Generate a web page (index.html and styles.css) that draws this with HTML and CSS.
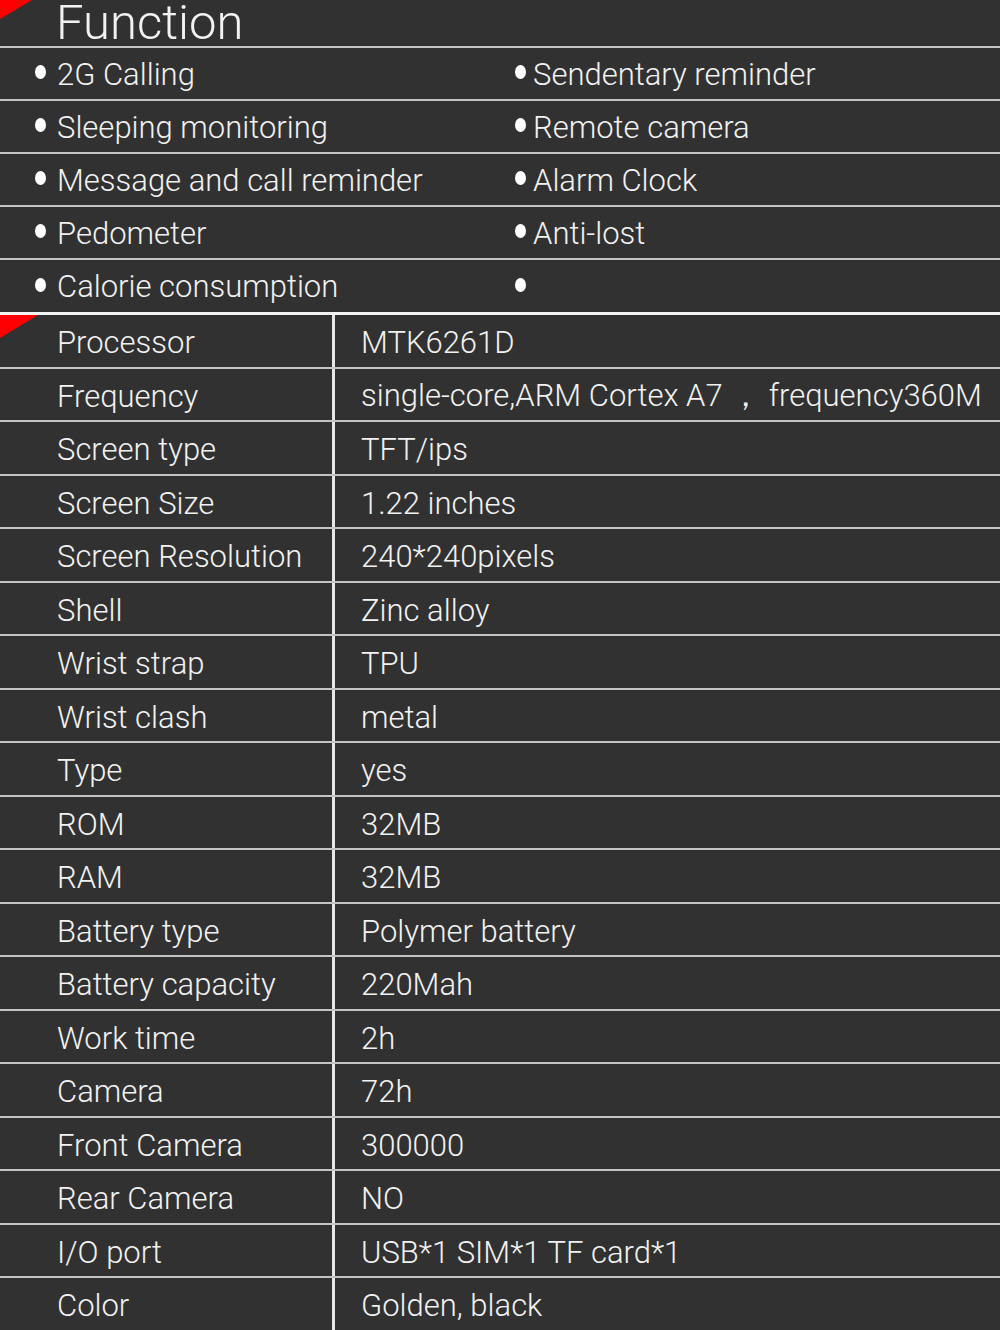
FILE: index.html
```html
<!DOCTYPE html>
<html lang="en">
<head>
    <meta charset="UTF-8">
    <title>Function</title>
    <link rel="stylesheet" href="styles.css">
</head>
<body>
    <div class="sheet">
        <div class="head">
            <span class="corner"></span>
            <h1>Function</h1>
        </div>

        <div class="features">
            <div class="frow">
                <div class="fcell"><span class="dot"></span>2G Calling</div>
                <div class="fcell right"><span class="dot"></span>Sendentary reminder</div>
            </div>
            <div class="frow">
                <div class="fcell"><span class="dot"></span>Sleeping monitoring</div>
                <div class="fcell right"><span class="dot"></span>Remote camera</div>
            </div>
            <div class="frow">
                <div class="fcell"><span class="dot"></span>Message and call reminder</div>
                <div class="fcell right"><span class="dot"></span>Alarm Clock</div>
            </div>
            <div class="frow">
                <div class="fcell"><span class="dot"></span>Pedometer</div>
                <div class="fcell right"><span class="dot"></span>Anti-lost</div>
            </div>
            <div class="frow">
                <div class="fcell"><span class="dot"></span>Calorie consumption</div>
                <div class="fcell right"><span class="dot"></span></div>
            </div>
        </div>

        <div class="specs">
            <span class="corner"></span>
            <div class="srow"><div class="label">Processor</div><div class="value">MTK6261D</div></div>
            <div class="srow"><div class="label">Frequency</div><div class="value">single-core,ARM Cortex A7 ， frequency360M</div></div>
            <div class="srow"><div class="label">Screen type</div><div class="value">TFT/ips</div></div>
            <div class="srow"><div class="label">Screen Size</div><div class="value">1.22 inches</div></div>
            <div class="srow"><div class="label">Screen Resolution</div><div class="value">240*240pixels</div></div>
            <div class="srow"><div class="label">Shell</div><div class="value">Zinc alloy</div></div>
            <div class="srow"><div class="label">Wrist strap</div><div class="value">TPU</div></div>
            <div class="srow"><div class="label">Wrist clash</div><div class="value">metal</div></div>
            <div class="srow"><div class="label">Type</div><div class="value">yes</div></div>
            <div class="srow"><div class="label">ROM</div><div class="value">32MB</div></div>
            <div class="srow"><div class="label">RAM</div><div class="value">32MB</div></div>
            <div class="srow"><div class="label">Battery type</div><div class="value">Polymer battery</div></div>
            <div class="srow"><div class="label">Battery capacity</div><div class="value">220Mah</div></div>
            <div class="srow"><div class="label">Work time</div><div class="value">2h</div></div>
            <div class="srow"><div class="label">Camera</div><div class="value">72h</div></div>
            <div class="srow"><div class="label">Front Camera</div><div class="value">300000</div></div>
            <div class="srow"><div class="label">Rear Camera</div><div class="value">NO</div></div>
            <div class="srow"><div class="label">I/O port</div><div class="value">USB*1 SIM*1 TF card*1</div></div>
            <div class="srow"><div class="label">Color</div><div class="value">Golden, black</div></div>
        </div>
    </div>
</body>
</html>
```

FILE: styles.css
```css
body {
    margin: 0;
    padding: 0;
    background: #313131;
    color: #f2f2f2;
    font-family: Roboto, 'Liberation Sans', sans-serif;
    font-weight: 300;
}

.sheet {
    width: 1000px;
    height: 1330px;
    overflow: hidden;
    background: #313131;
}

.corner {
    position: absolute;
    top: 0;
    left: 0;
    width: 38px;
    height: 23px;
    background: #f00;
    clip-path: polygon(0 0, 100% 0, 0 100%);
}

.head {
    position: relative;
    height: 46px;
    border-bottom: 2px solid #c4c4c4;
}

.head .corner {
    width: 32px;
    height: 19px;
}

.head h1 {
    margin: 0;
    padding-left: 56px;
    font-size: 49px;
    font-weight: 300;
    line-height: 46px;
}

.frow {
    display: grid;
    grid-template-columns: 480px 1fr;
    height: 51px;
    border-bottom: 2px solid #c4c4c4;
    font-size: 31px;
}

.frow:last-child {
    border-bottom: 3px solid #f4f4f4;
    height: 52px;
}

.fcell {
    display: flex;
    align-items: center;
    padding-left: 35px;
    padding-top: 1px;
}

.dot {
    display: inline-block;
    width: 11px;
    height: 14px;
    border-radius: 50%;
    background: #fff;
    margin-right: 11px;
    margin-top: -4px;
}

.right .dot {
    margin-right: 7px;
}

.specs {
    position: relative;
}

.srow {
    display: grid;
    grid-template-columns: 335px 1fr;
    height: 51.5px;
    border-bottom: 2px solid #c4c4c4;
    font-size: 31px;
}

.label, .value {
    display: flex;
    align-items: center;
    padding-top: 4px;
}

.label {
    padding-left: 57px;
    border-right: 3px solid #e8e8e8;
}

.value {
    padding-left: 26px;
    white-space: nowrap;
}
```
